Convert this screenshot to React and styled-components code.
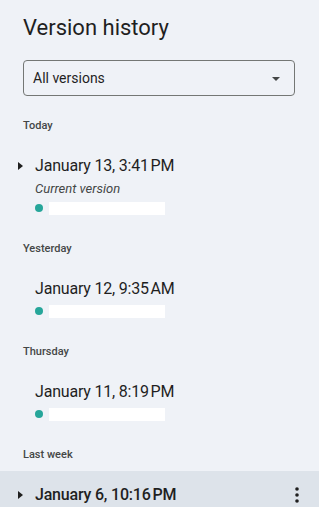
import React from "react";
import styled, { createGlobalStyle } from "styled-components";

const GlobalStyle = createGlobalStyle`
  html, body {
    margin: 0;
    padding: 0;
    background: #eff2f7;
  }
  body {
    font-family: Roboto, "Liberation Sans", Arial, sans-serif;
    color: #1f1f1f;
  }
`;

const groups = [
  {
    label: "Today",
    items: [{ date: "January 13, 3:41\u202FPM", expandable: true, current: true }],
  },
  {
    label: "Yesterday",
    items: [{ date: "January 12, 9:35\u202FAM" }],
  },
  {
    label: "Thursday",
    items: [{ date: "January 11, 8:19\u202FPM" }],
  },
  {
    label: "Last week",
    items: [{ date: "January 6, 10:16\u202FPM", expandable: true, hovered: true }],
  },
];

export default function App() {
  return (
    <>
      <GlobalStyle />
      <Panel>
        <Title>Version history</Title>
        <Select>
          <span>All versions</span>
          <Caret />
        </Select>
        <List>
          {groups.map((group) => (
            <section key={group.label}>
              <GroupLabel>{group.label}</GroupLabel>
              {group.items.map((item) => (
                <VersionRow key={item.date} $hovered={item.hovered}>
                  <Toggle>{item.expandable && <ArrowRight />}</Toggle>
                  <VersionBody>
                    <DateText $hovered={item.hovered}>{item.date}</DateText>
                    {item.current && <Subtitle>Current version</Subtitle>}
                    {!item.hovered && (
                      <Editor>
                        <EditorDot />
                        <EditorName />
                      </Editor>
                    )}
                  </VersionBody>
                  {item.hovered && (
                    <MoreButton>
                      <svg width="4" height="16" viewBox="0 0 4 16">
                        <circle cx="2" cy="2" r="1.8" fill="#1f1f1f" />
                        <circle cx="2" cy="8" r="1.8" fill="#1f1f1f" />
                        <circle cx="2" cy="14" r="1.8" fill="#1f1f1f" />
                      </svg>
                    </MoreButton>
                  )}
                </VersionRow>
              ))}
            </section>
          ))}
        </List>
      </Panel>
    </>
  );
}

const Panel = styled.div`
  width: 319px;
  height: 507px;
  overflow: hidden;
  background: #eff2f7;
  padding-top: 14px;
  box-sizing: border-box;
`;

const Title = styled.h1`
  margin: 0 0 18px 23px;
  font-size: 22px;
  line-height: 28px;
  font-weight: 400;
  color: #1f1f1f;
`;

const Select = styled.div`
  margin: 0 24px 0 23px;
  height: 36px;
  box-sizing: border-box;
  border: 1px solid #747775;
  border-radius: 4px;
  display: flex;
  align-items: center;
  justify-content: space-between;
  padding: 0 14px 0 9px;
  font-size: 14px;
  color: #1f1f1f;
`;

const Caret = styled.span`
  width: 0;
  height: 0;
  border-left: 4px solid transparent;
  border-right: 4px solid transparent;
  border-top: 4px solid #444746;
  margin-top: 1px;
`;

const List = styled.div`
  margin-top: 8px;
`;

const GroupLabel = styled.div`
  padding: 14px 23px 8px;
  font-size: 11px;
  line-height: 16px;
  font-weight: 500;
  color: #444746;
`;

const VersionRow = styled.div`
  display: flex;
  align-items: flex-start;
  padding: 12px 0 12px;
  background: ${(p) => (p.$hovered ? "#dde3ea" : "transparent")};
`;

const Toggle = styled.div`
  width: 35px;
  height: 24px;
  display: flex;
  align-items: center;
  justify-content: flex-start;
  padding-left: 18px;
  box-sizing: border-box;
`;

const ArrowRight = styled.span`
  width: 0;
  height: 0;
  border-top: 4.5px solid transparent;
  border-bottom: 4.5px solid transparent;
  border-left: 5px solid #1f1f1f;
`;

const VersionBody = styled.div`
  flex: 1;
  display: flex;
  flex-direction: column;
`;

const DateText = styled.div`
  font-size: 16px;
  line-height: 24px;
  letter-spacing: -0.2px;
  font-weight: ${(p) => (p.$hovered ? 500 : 400)};
  color: #1f1f1f;
`;

const Subtitle = styled.div`
  font-size: 13px;
  line-height: 18px;
  font-style: italic;
  color: #444746;
  margin-top: 2px;
`;

const Editor = styled.div`
  display: flex;
  align-items: center;
  gap: 6px;
  margin-top: 3px;
  height: 14px;
`;

const EditorDot = styled.span`
  width: 8px;
  height: 8px;
  border-radius: 50%;
  background: #26a69a;
`;

const EditorName = styled.span`
  width: 116px;
  height: 13px;
  background: #ffffff;
`;

const MoreButton = styled.div`
  width: 24px;
  height: 24px;
  display: flex;
  align-items: center;
  justify-content: center;
  margin-right: 10px;
`;
